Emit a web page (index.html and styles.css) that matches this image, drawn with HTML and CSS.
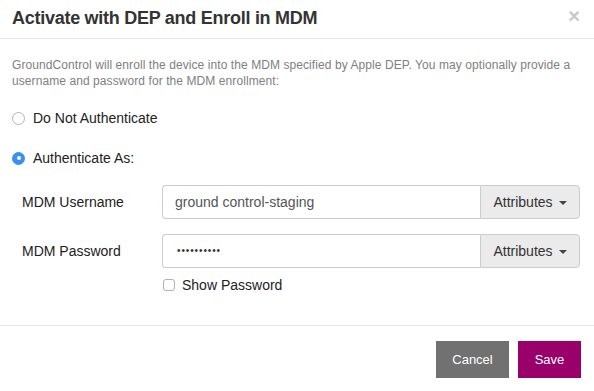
FILE: index.html
```html
<!DOCTYPE html>
<html>
<head>
<meta charset="utf-8">
<link rel="stylesheet" href="styles.css">
</head>
<body>
<div class="modal">
  <div class="modal-header">
    <h4 class="title">Activate with DEP and Enroll in MDM</h4>
    <span class="close">&#215;</span>
  </div>
  <div class="modal-body">
    <p class="intro">GroundControl will enroll the device into the MDM specified by Apple DEP. You may optionally provide a username and password for the MDM enrollment:</p>
    <div class="radio first">
      <span class="radio-dot"></span>
      <span class="radio-label">Do Not Authenticate</span>
    </div>
    <div class="radio second">
      <span class="radio-dot checked"></span>
      <span class="radio-label">Authenticate As:</span>
    </div>
    <div class="fields">
      <div class="row">
        <label class="row-label">MDM Username</label>
        <div class="input-group">
          <div class="input">ground control-staging</div>
          <div class="addon">Attributes <span class="caret"></span></div>
        </div>
      </div>
      <div class="row pw">
        <label class="row-label">MDM Password</label>
        <div class="input-group">
          <div class="input dots">••••••••••</div>
          <div class="addon">Attributes <span class="caret"></span></div>
        </div>
      </div>
      <div class="check-row">
        <span class="checkbox"></span>
        <span class="check-label">Show Password</span>
      </div>
    </div>
  </div>
  <div class="modal-footer">
    <button class="btn cancel">Cancel</button>
    <button class="btn save">Save</button>
  </div>
</div>
</body>
</html>
```

FILE: styles.css
```css
* { box-sizing: border-box; }
html, body { margin: 0; padding: 0; background: #fff; }
body { font-family: "Liberation Sans", Arial, sans-serif; color: #333; width: 594px; height: 391px; overflow: hidden; }
.modal { width: 594px; }
.modal-header {
  height: 39px;
  border-bottom: 1px solid #e5e5e5;
  display: flex;
  align-items: flex-start;
  justify-content: space-between;
  padding: 8px 14px 0 12px;
}
.title { margin: 0; font-size: 18px; line-height: 20px; font-weight: bold; color: #333; letter-spacing: -0.27px; }
.close { font-size: 20px; line-height: 16px; font-weight: bold; color: #c8c8c8; }
.modal-body { padding: 18px 14px 0 12px; height: 286px; }
.intro { margin: 0; font-size: 12px; line-height: 16px; color: #808080; letter-spacing: 0.08px; }
.radio { display: flex; align-items: center; height: 20px; }
.radio.first { margin-top: 19px; }
.radio.second { margin-top: 20px; }
.radio-dot {
  width: 13px; height: 13px; border-radius: 50%;
  border: 1px solid #b5b5b5; background: #fff;
  margin-right: 8px; position: relative;
}
.radio-dot.checked { background: #3a8ff6; border-color: #3a8ff6; }
.radio-dot.checked::after {
  content: ""; position: absolute; left: 3.5px; top: 3.5px;
  width: 4px; height: 4px; border-radius: 50%; background: #fff;
}
.radio-label { font-size: 14px; color: #222; }
.fields { padding-left: 10px; margin-top: 17px; }
.row { display: flex; align-items: center; height: 34px; }
.row.pw { margin-top: 15px; }
.row-label { width: 140px; font-size: 14px; color: #222; }
.input-group { display: flex; width: 418px; height: 34px; }
.input {
  flex: 1; border: 1px solid #ccc; border-right: none; border-radius: 4px 0 0 4px;
  padding: 0 12px; font-size: 14px; line-height: 32px; color: #555;
}
.input.dots { font-size: 10px; letter-spacing: 0.9px; color: #333; padding-left: 14px; }
.addon {
  width: 100px; border: 1px solid #ccc; border-radius: 0 4px 4px 0;
  background: #ebebeb; font-size: 14px; color: #333;
  display: flex; align-items: center; justify-content: center; gap: 6px;
}
.caret { width: 0; height: 0; border-left: 4px solid transparent; border-right: 4px solid transparent; border-top: 4px solid #444; margin-top: 1px; }
.check-row { display: flex; align-items: center; height: 20px; margin-top: 7px; padding-left: 140px; }
.checkbox { width: 12px; height: 12px; border: 1px solid #b0b0b0; border-radius: 3px; margin-left: 1px; margin-right: 7px; background: #fff; }
.check-label { font-size: 14px; color: #222; }
.modal-footer {
  border-top: 1px solid #e5e5e5;
  padding: 15px 13px 13px 0;
  display: flex; justify-content: flex-end; gap: 9px;
}
.btn { border: none; height: 37px; font-family: "Liberation Sans", Arial, sans-serif; font-size: 13px; color: #fff; padding: 0; }
.cancel { width: 73px; background: #717171; }
.save { width: 63px; background: #990069; }
```
